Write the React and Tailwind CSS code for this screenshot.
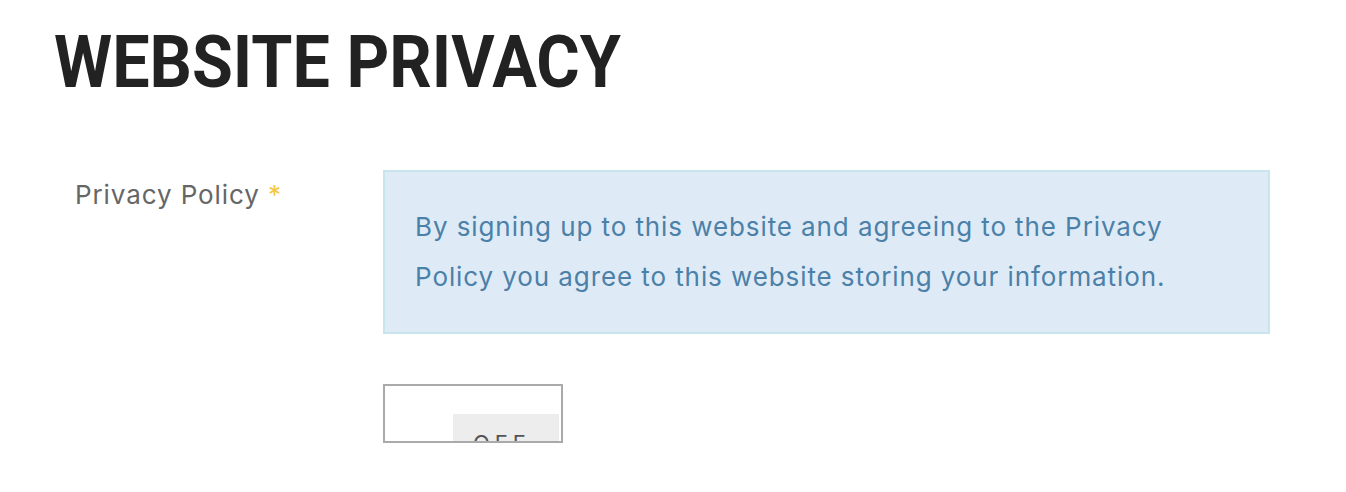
export default function App() {
  return (
    <div className="min-h-screen bg-white font-['Inter','Noto_Sans',sans-serif]">
      <div className="pl-[54px] pt-[27px]">
        <h1 className="origin-left scale-x-[0.923] text-[72px] leading-none font-bold text-[#222222] uppercase font-['Roboto',sans-serif]">
          Website Privacy
        </h1>
      </div>

      <div className="mt-[71px] flex">
        <div className="w-[383px] shrink-0 pl-[75px] pt-[10px]">
          <label className="text-[26px] leading-[30px] text-[#666666] tracking-[0.035em]">
            Privacy Policy <span className="text-[#f3c745]">*</span>
          </label>
        </div>

        <div className="w-[887px]">
          <div className="border-2 border-[#c8e5ee] bg-[#deebf6] px-[30px] py-[30px] text-[26px] leading-[50px] text-[#4b80a8] tracking-[0.035em]">
            By signing up to this website and agreeing to the Privacy
            <br />
            Policy you agree to this website storing your information.
          </div>

          <div className="mt-[50px] h-[59px] w-[180px] overflow-hidden border-2 border-[#aaaaaa] bg-white">
            <div className="ml-[68px] mt-[28px] h-[60px] w-[106px] bg-[#ededed] pl-[20px] pt-[18px] text-left text-[22px] leading-none tracking-[5px] text-[#555555]">
              OFF
            </div>
          </div>
        </div>
      </div>
    </div>
  );
}
